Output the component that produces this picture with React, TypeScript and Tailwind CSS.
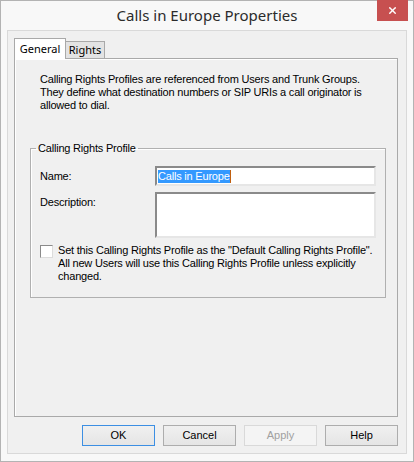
import { X } from 'lucide-react';

const body = "font-['Liberation_Sans',Arial,sans-serif] text-[11px] leading-[13px] tracking-[-0.2px] text-black";

function DialogButton({ label, primary, disabled }: { label: string; primary?: boolean; disabled?: boolean }) {
  let tone = 'border-[#adadad] bg-gradient-to-b from-[#f0f0f0] to-[#e5e5e5] text-black';
  if (primary) tone = 'border-[#3c8fe3] bg-gradient-to-b from-[#f0f0f0] to-[#e5e5e5] text-black';
  if (disabled) tone = 'border-[#d9d9d9] bg-[#f4f4f4] text-[#a0a0a0]';
  return (
    <button
      className={`h-[21px] w-[73px] border ${tone} font-['Liberation_Sans',Arial,sans-serif] text-[11px] leading-[13px]`}
      disabled={disabled}
    >
      {label}
    </button>
  );
}

export default function App() {
  return (
    <div className="flex h-[462px] w-[414px] flex-col border border-[#b3b3b3] bg-[#f8f8f8]">
      {/* Title bar */}
      <div className="relative flex h-[29px] shrink-0 items-center justify-center">
        <span className="font-['Noto_Sans',sans-serif] text-[15px] text-[#2b2b2b]">Calls in Europe Properties</span>
        <div className="absolute top-[-1px] right-[5px] flex h-[21px] w-[31px] items-center justify-center bg-[#c75050]">
          <X className="h-[11px] w-[11px] text-white" strokeWidth={3} />
        </div>
      </div>

      {/* Client area */}
      <div className="mx-[6px] flex h-[424px] flex-col border border-[#d9d9d9] bg-[#f0f0f0] pt-[7px] pr-[8px] pl-[6px]">
        {/* Tabs */}
        <div className="relative z-10 flex h-[20px] items-end">
          <div className="-mb-px flex h-[21px] w-[52px] items-start justify-center border border-b-0 border-[#a9a9a9] bg-white pt-[2px] font-['Noto_Sans',sans-serif] text-[11px] leading-[15px] text-black">
            General
          </div>
          <div className="flex h-[17px] w-[39px] items-start justify-center border border-l-0 border-b-0 border-[#a9a9a9] bg-[#e3e3e3] font-['Noto_Sans',sans-serif] text-[11px] leading-[15px] text-black">
            Rights
          </div>
        </div>

        {/* Tab page */}
        <div className={`flex h-[359px] flex-col border border-[#a9a9a9] bg-[#f0f0f0] shadow-[inset_1px_1px_0_#ffffff] pt-[14px] px-[15px] ${body}`}>
          <p className="pl-[10px] whitespace-nowrap">
            Calling Rights Profiles are referenced from Users and Trunk Groups.
            <br />
            They define what destination numbers or SIP URIs a call originator is
            <br />
            allowed to dial.
          </p>

          <fieldset className="mt-[30px] mr-[-4px] border border-[#b0b0b0] pr-[9px] pb-[14px] pl-[9px] shadow-[inset_1px_1px_0_#ffffff]">
            <legend className="ml-[-4px] px-[2px]">Calling Rights Profile</legend>

            <div className="mt-[11px] flex items-center">
              <span className="w-[115px]">Name:</span>
              <div className="flex h-[20px] w-[221px] items-center border-2 border-t-[#8a8a8a] border-l-[#8a8a8a] border-r-[#e6e6e6] border-b-[#e6e6e6] bg-white pl-[1px]">
                <span className="bg-[#3399ff] text-white">Calls in Europe</span>
                <span className="h-[13px] w-px bg-[#c06010]" />
              </div>
            </div>

            <div className="mt-[6px] flex items-start">
              <span className="w-[115px] pt-[4px]">Description:</span>
              <div className="h-[46px] w-[221px] border-2 border-t-[#8a8a8a] border-l-[#8a8a8a] border-r-[#e6e6e6] border-b-[#e6e6e6] bg-white" />
            </div>

            <div className="mt-[6px] flex items-start">
              <div className="mt-[1px] h-[13px] w-[13px] shrink-0 border border-t-[#8a8a8a] border-l-[#8a8a8a] border-r-[#dcdcdc] border-b-[#dcdcdc] bg-white" />
              <p className="ml-[5px] whitespace-nowrap">
                Set this Calling Rights Profile as the "Default Calling Rights Profile".
                <br />
                All new Users will use this Calling Rights Profile unless explicitly
                <br />
                changed.
              </p>
            </div>
          </fieldset>
        </div>

        {/* Buttons */}
        <div className="mt-[8px] flex justify-end gap-[8px]">
          <DialogButton label="OK" primary />
          <DialogButton label="Cancel" />
          <DialogButton label="Apply" disabled />
          <DialogButton label="Help" />
        </div>
      </div>
    </div>
  );
}
